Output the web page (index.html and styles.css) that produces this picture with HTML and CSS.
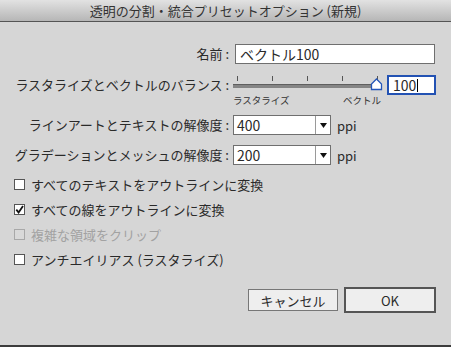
FILE: index.html
```html
<!DOCTYPE html>
<html lang="ja">
  <head>
    <meta charset="UTF-8" />
    <meta name="viewport" content="width=device-width, initial-scale=1.0" />
    <title>透明の分割・統合プリセットオプション</title>
    <link rel="stylesheet" href="styles.css">
  </head>
  <body>
    <div class="window">
      <div class="titlebar">透明の分割・統合プリセットオプション (新規)</div>
      <div class="content">
        <!-- Name -->
        <div class="row row-name">
          <span class="label">名前 :</span>
          <div class="field name-field">ベクトル100</div>
        </div>
        <!-- Balance slider -->
        <div class="row row-balance">
          <span class="label">ラスタライズとベクトルのバランス :</span>
          <div class="slider">
            <div class="ticks"><i></i><i></i><i></i><i></i><i></i></div>
            <div class="track"></div>
            <svg class="thumb" width="13" height="13" viewBox="0 0 13 13">
              <path d="M6.5 1 L11.5 6 L11.5 11.5 L1.5 11.5 L1.5 6 Z" fill="#fff" stroke="#2456b8" stroke-width="1.3" />
            </svg>
            <div class="slider-labels"><span>ラスタライズ</span><span>ベクトル</span></div>
          </div>
          <div class="field value-field">100<span class="caret"></span></div>
        </div>
        <!-- Resolutions -->
        <div class="row row-res">
          <span class="label">ラインアートとテキストの解像度 :</span>
          <div class="select">
            <span class="select-value">400</span>
            <span class="select-arrow"><svg width="7" height="5" viewBox="0 0 7 5"><path d="M0 0 H7 L3.5 5 Z" fill="#111" /></svg></span>
          </div>
          <span class="unit">ppi</span>
        </div>
        <div class="row row-res row-res2">
          <span class="label">グラデーションとメッシュの解像度 :</span>
          <div class="select">
            <span class="select-value">200</span>
            <span class="select-arrow"><svg width="7" height="5" viewBox="0 0 7 5"><path d="M0 0 H7 L3.5 5 Z" fill="#111" /></svg></span>
          </div>
          <span class="unit">ppi</span>
        </div>
        <!-- Options -->
        <div class="checks">
          <div class="check"><span class="box"></span>すべてのテキストをアウトラインに変換</div>
          <div class="check">
            <span class="box"><svg width="9" height="9" viewBox="0 0 9 9"><path d="M1.3 4.6 L3.6 7.4 L8 1" fill="none" stroke="#111" stroke-width="1.8" /></svg></span>すべての線をアウトラインに変換
          </div>
          <div class="check disabled"><span class="box"></span>複雑な領域をクリップ</div>
          <div class="check"><span class="box"></span>アンチエイリアス (ラスタライズ)</div>
        </div>
        <!-- Buttons -->
        <div class="buttons">
          <div class="button cancel">キャンセル</div>
          <div class="button ok">OK</div>
        </div>
      </div>
    </div>
  </body>
</html>
```

FILE: styles.css
```css
body {
  margin: 0;
  background-color: #d6d6d6;
  font-family: "Noto Sans CJK JP", sans-serif;
  font-size: 13px;
  color: #2a2a2a;
}
.window {
  width: 451px;
  height: 345px;
  border-bottom: 2px solid #3c3c3c;
  overflow: hidden;
}
.titlebar {
  height: 21px;
  line-height: 21px;
  border-bottom: 1px solid #555;
  background: linear-gradient(#e2e2e2, #b6b6b6);
  text-align: center;
  color: #333;
  font-size: 13px;
}
.row {
  display: flex;
  align-items: center;
}
.label {
  width: 233px;
  flex: none;
  padding-right: 4px;
  box-sizing: border-box;
  text-align: right;
  font-size: 13px;
  line-height: 20px;
  white-space: pre;
}
.field {
  box-sizing: border-box;
  background-color: #fff;
  border: 1px solid #6f6f6f;
  height: 20px;
  line-height: 18px;
  font-size: 14px;
}
.row-name {
  margin-top: 22px;
}
.name-field {
  width: 200px;
  margin-left: 2px;
  padding-left: 4px;
}
.row-balance {
  margin-top: 11px;
  align-items: flex-start;
}
.slider {
  position: relative;
  width: 148px;
}
.ticks {
  display: flex;
  column-gap: 34px;
  padding-left: 4px;
  margin-top: 1px;
  height: 5px;
}
.ticks i {
  width: 1px;
  background-color: #555;
}
.track {
  margin-top: 3px;
  height: 4px;
  width: 147px;
  box-sizing: border-box;
  background-color: #858585;
  border-top: 1px solid #5f5f5f;
}
.thumb {
  position: absolute;
  left: 137px;
  top: 3px;
}
.slider-labels {
  display: flex;
  justify-content: space-between;
  margin-top: 6px;
  font-size: 9.5px;
  line-height: 12px;
  color: #333;
}
.value-field {
  width: 49px;
  height: 20px;
  margin-left: 6px;
  border: 2px solid #2352b3;
  padding-left: 4px;
  line-height: 16px;
  font-size: 14px;
  display: flex;
  align-items: center;
}
.caret {
  width: 1px;
  height: 13px;
  margin-left: 1px;
  background-color: #000;
}
.row-res {
  margin-top: 9px;
}
.row-res2 {
  margin-top: 10px;
}
.select {
  box-sizing: border-box;
  display: flex;
  width: 98px;
  height: 20px;
  border: 1px solid #6f6f6f;
  background-color: #fff;
}
.select-value {
  flex: 1;
  padding-left: 3px;
  line-height: 18px;
  font-size: 14px;
}
.select-arrow {
  width: 14px;
  border-left: 1px solid #9a9a9a;
  display: flex;
  align-items: center;
  justify-content: center;
}
.unit {
  margin-left: 6px;
  font-size: 13px;
}
.checks {
  margin-top: 7px;
}
.check {
  display: flex;
  align-items: center;
  height: 25px;
  padding-left: 14px;
  font-size: 13px;
}
.box {
  box-sizing: border-box;
  width: 11px;
  height: 11px;
  margin-right: 6px;
  border: 1px solid #555;
  background-color: #fff;
  display: flex;
  align-items: center;
  justify-content: center;
}
.check.disabled {
  color: #a2a2a2;
}
.check.disabled .box {
  border-color: #a8a8a8;
  background-color: #d9d9d9;
}
.buttons {
  display: flex;
  justify-content: flex-end;
  align-items: center;
  column-gap: 6px;
  padding-right: 15px;
  margin-top: 15px;
}
.button {
  box-sizing: border-box;
  display: flex;
  align-items: center;
  justify-content: center;
  background-color: #eeeeee;
  font-size: 13px;
}
.cancel {
  width: 90px;
  height: 22px;
  border: 1px solid #777;
}
.ok {
  width: 92px;
  height: 26px;
  border: 2px solid #555;
}
```
